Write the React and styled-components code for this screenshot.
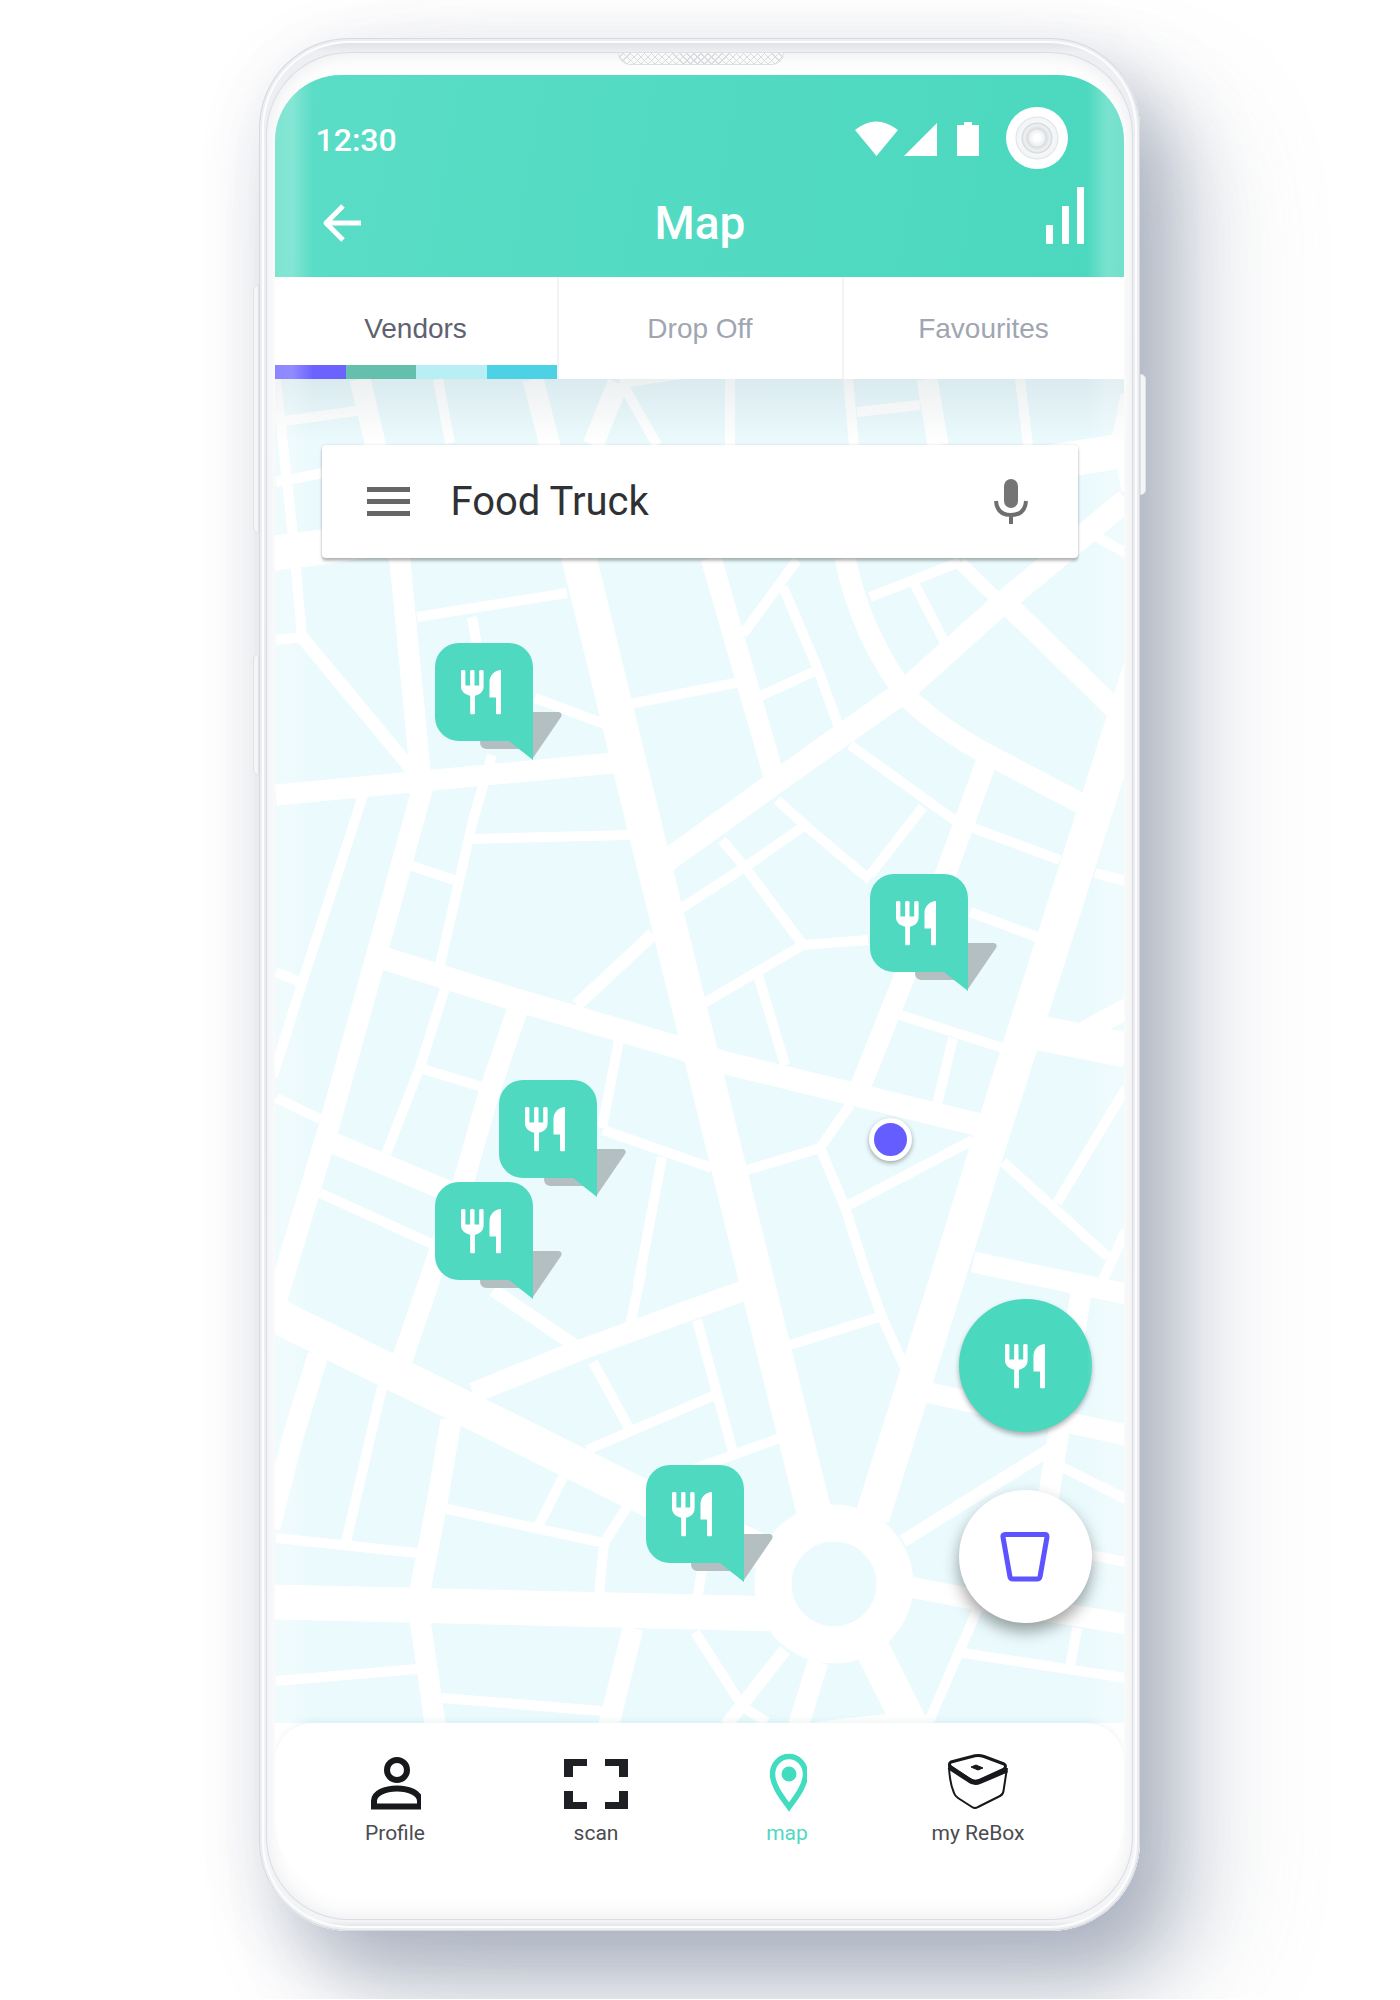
import React from "react";
import styled, { createGlobalStyle } from "styled-components";

const MINT = "#4fd9c0";
const INDIGO = "#655dff";

const GlobalStyle = createGlobalStyle`
  *, *::before, *::after { box-sizing: border-box; }
  body { margin: 0; background: #fff; font-family: Roboto, "Liberation Sans", sans-serif; }
  button, input { font: inherit; color: inherit; border: 0; padding: 0; background: none; }
`;

const Stage = styled.main`
  display: flex;
  justify-content: center;
  padding: 38px 25px 68px 23px;
  overflow: hidden;
`;

const Phone = styled.div`
  position: relative;
  width: 100%;
  max-width: 881px;
  padding: 14px 7px 11px;
  border-radius: 90px;
  background: linear-gradient(#d9dbe1, #eeeff2 14px, #e9ebef 50%, #f3f4f6 calc(100% - 10px), #d5d8de);
  box-shadow:
    inset 0 0 0 1px #d6d9e0,
    inset 0 0 0 3px #eceef1,
    inset 0 0 0 5px #fdfdfe,
    0 10px 80px rgba(40, 50, 80, 0.06),
    34px 48px 80px rgba(112, 124, 148, 0.48),
    80px 60px 120px rgba(130, 140, 160, 0.16);
`;

const SideKey = styled.span`
  position: absolute;
  ${(p) => (p.$side === "left" ? "right: 100%;" : "left: 100%;")}
  top: ${(p) => p.$top}px;
  width: 6px;
  height: ${(p) => p.$height}px;
  border: 1px solid #dfe2e7;
  border-radius: ${(p) => (p.$side === "left" ? "5px 0 0 5px" : "0 5px 5px 0")};
  background: #f4f5f7;
`;

const Face = styled.div`
  position: relative;
  padding: 23px 9px 30px;
  border-radius: 83px;
  background: #fff;
  box-shadow: inset 0 0 0 1px #d9dce3, inset 0 0 22px rgba(60, 70, 90, 0.13);
`;

const Speaker = styled.span`
  position: absolute;
  top: 0;
  left: 50%;
  width: 166px;
  height: 13px;
  margin-left: -81px;
  border: 1px solid #dcdfe4;
  border-radius: 2px 2px 20px 20px;
  background:
    repeating-linear-gradient(45deg, #d9dbdf 0 1px, transparent 1px 5px),
    repeating-linear-gradient(-45deg, #d9dbdf 0 1px, #fafafa 1px 5px);
`;

const Screen = styled.div`
  position: relative;
  overflow: hidden;
  border-radius: 66px 66px 70px 70px;
  background: #fff;
`;

const Gloss = styled.span`
  position: absolute;
  z-index: 2;
  top: 0;
  bottom: 0;
  ${(p) => p.$side}: 0;
  width: 38px;
  pointer-events: none;
  background: linear-gradient(
    to ${(p) => p.$side},
    transparent,
    rgba(255, 255, 255, 0.26) 55%,
    rgba(255, 255, 255, 0.22)
  );
`;

const Header = styled.header`
  height: 202px;
  padding: 32px 39px 0 41px;
  color: #fff;
  background: linear-gradient(100deg, #5bddc6, #4ad8be);
`;

const StatusBar = styled.div`
  display: flex;
  align-items: center;
  height: 62px;
  padding-right: 17px;
`;

const Clock = styled.time`
  flex: 1;
  padding-top: 4px;
  font-size: 32px;
  line-height: 40px;
  font-weight: 500;
`;

const Camera = styled.span`
  width: 62px;
  height: 62px;
  margin-left: 27px;
  border-radius: 50%;
  background: radial-gradient(
    circle at 50% 50%,
    #fff 0 3px, #eceef0 8px, #d9dde0 9px, #eff1f2 13px, #d5dadd 15px,
    #f6f7f8 16px, #f3f4f5 20px, #e0e4e6 21px, #fff 22px
  );
`;

const TitleBar = styled.div`
  display: grid;
  grid-template-columns: 48px 1fr 48px;
  align-items: center;
  height: 64px;
  margin-top: 12px;
`;

const IconButton = styled.button`
  display: flex;
  justify-content: ${(p) => p.$align || "center"};
  cursor: pointer;
`;

const Title = styled.h1`
  margin: 0;
  padding-top: 14px;
  text-align: center;
  font-size: 46px;
  line-height: 56px;
  font-weight: 500;
`;

const Tabs = styled.nav`
  position: relative;
  display: grid;
  grid-template-columns: 282fr 285fr 282fr;
  height: 102px;
  background: #fff;
`;

const Tab = styled.button`
  position: relative;
  padding-top: 2px;
  font-family: "Liberation Sans", Arial, sans-serif;
  font-size: 28px;
  line-height: 32px;
  color: ${(p) => (p.$active ? "#5d6270" : "#a0a6b1")};
  cursor: pointer;
  & + & { border-left: 2px solid #f2f3f4; }
`;

const Stripe = styled.span`
  position: absolute;
  left: 0;
  right: 0;
  bottom: 0;
  height: 14px;
  background: linear-gradient(
    to right,
    #6c63ff 25%, #64bfad 25% 50%, #b8eff4 50% 75%, #4dd1e5 75%
  );
`;

const MapArea = styled.section`
  position: relative;
  aspect-ratio: 849 / 1344;
  background: #eafafd;
`;

const Streets = styled.svg`
  position: absolute;
  inset: 0;
  width: 100%;
  height: calc(100% + 40px);
  fill: none;
  stroke: #fff;
`;

const TopShade = styled.span`
  position: absolute;
  inset: 0 0 auto;
  height: 64px;
  background: linear-gradient(rgba(120, 140, 150, 0.14), rgba(120, 150, 160, 0));
`;

const Search = styled.form`
  position: relative;
  display: flex;
  align-items: center;
  height: 113px;
  margin: 0 46px 0 47px;
  padding: 0 48px 0 45px;
  border-radius: 4px;
  background: #fff;
  box-shadow: 0 0 3px rgba(0, 0, 0, 0.12), 0 3px 3px rgba(0, 0, 0, 0.26);
`;

const MapTop = styled.div`
  padding-top: 66px;
`;

const SearchInput = styled.input`
  flex: 1;
  min-width: 0;
  margin-left: 41px;
  font-size: 40px;
  line-height: 48px;
  color: #303134;
  outline: 0;
`;

const Pin = styled.button`
  position: absolute;
  left: ${(p) => p.$x}%;
  top: ${(p) => p.$y}%;
  width: 128px;
  height: 118px;
  cursor: pointer;
  svg { display: block; }
`;

const Here = styled.span`
  position: absolute;
  left: 70%;
  top: 55%;
  width: 43px;
  height: 43px;
  border: 5px solid #fff;
  border-radius: 50%;
  background: ${INDIGO};
  box-shadow: 0 2px 5px rgba(0, 0, 0, 0.35);
`;

const Actions = styled.div`
  position: absolute;
  right: 32px;
  bottom: 100px;
  display: grid;
  gap: 58px;
`;

const Fab = styled.button`
  display: grid;
  place-items: center;
  width: 133px;
  height: 133px;
  border-radius: 50%;
  background: ${(p) => (p.$filled ? "#4ad8be" : "#fff")};
  box-shadow: ${(p) =>
    p.$filled ? "0 3px 5px rgba(0, 0, 0, 0.3)" : "0 8px 16px rgba(0, 0, 0, 0.38)"};
  cursor: pointer;
`;

const BottomNav = styled.nav`
  position: relative;
  display: grid;
  grid-template-columns: 10fr 10fr 9fr 10fr;
  height: 167px;
  padding: 29px 45px 0 20px;
  border-radius: 38px 38px 0 0;
  background: #fff;
  box-shadow: 0 -2px 6px rgba(80, 140, 150, 0.1);
`;

const NavItem = styled.a`
  display: flex;
  flex-direction: column;
  align-items: center;
  gap: 9px;
  height: 96px;
  font-size: 21px;
  line-height: 24px;
  color: ${(p) => (p.$active ? MINT : "#4a4b4f")};
  text-decoration: none;
`;

/* Streets grouped by stroke width, in map units. */
const ROADS = [
  [10, `M276 422L357 411 M276 379L293 537L302 637 M276 482L323 473 M276 640L303 637
    M438 379L450 443 M417 617L567 593 M472 617L477 645 M535 698L607 725 M625 388L657 445
    M620 383L690 373 M730 379V445 M848 379L854 445 M857 412L920 405 M1020 379L1028 445
    M797 560L743 634 M783 587L817 667L840 730 M758 697L813 672 M870 597L960 562
    M914 583L945 643 M1097 537L1126 553 M630 704L740 682 M850 745L957 822L1060 860
    M923 807L870 875 M1095 873L1126 881 M777 800L807 827L870 880 M804 826L745 867L680 909
    M722 840L745 867L803 945L868 940 M803 945L704 1003 M758 975L785 1065 M970 912L1040 938
    M900 1015L1003 1048 M953 1038L937 1105 M850 1105L820 1148L747 1170 M973 1140L845 1207
    M820 1148L845 1207L865 1270L882 1317L905 1368 M1003 1162L1108 1257 M1057 1203L1126 1088
    M1126 1230L1102 1282 M1062 1467L1126 1499 M1080 1553L1126 1562 M978 1608L927 1726
    M963 1653L1126 1678 M1077 1628L1070 1667 M695 1632L743 1707L767 1722 M790 1345L882 1316
    M697 1320L733 1452 M715 1395L587 1450 M780 1438L650 1485 M642 1270L630 1325
    M662 1157L638 1285 M593 1362L630 1430 M382 1387L346 1542 M276 1538L417 1553
    M443 1508L604 1543 M563 1477L538 1527 M627 1507L604 1543L599 1595 M702 1570L697 1600
    M276 1681L417 1669 M442 1698L602 1711 M363 795L355 820L302 983L273 1076 M276 972L300 982
    M412 866L454 880 M492 755L473 820L440 965 M473 839L630 835 M445 988L420 1067L386 1154
    M423 1069L482 1087 M276 1098L320 1119 M320 1193L432 1244 M619 1040L602 1128 M603 1130L712 1168
    M815 1727L895 1718`],
  [13, `M302 637L412 770 M653 934L577 1005 M960 563L998 600 M1054 1447L903 1541
    M493 1290L577 1347 M785 1650L726 1725`],
  [21, `M533 379L575 545 M360 379L375 443L400 562L422 790L377 953L328 1130L273 1312 M618 383L593 445
    M927 379L938 445 M711 558L775 780 M845 558Q862 640 912 702Q943 730 983 752L1082 804
    M1008 605L1122 716 M987 760L947 870L903 980L857 1095 M276 795L613 763
    M1085 1031L1130 1007 M973 1262L1126 1294 M1082 1287L1048 1500 M925 1392L1126 1435
    M910 1587L967 1598L1126 1624 M818 1662L798 1727 M745 1290L690 1310L575 1352L473 1393
    M518 1008L489 1093L464 1180L433 1270L402 1360 M318 1355L292 1440L270 1528
    M451 1420L437 1503L420 1590 M420 1620L436 1730 M633 1628L607 1732 M331 1142L450 1192
    M1131 395L1122 440L1132 490`],
  [23, `M1126 500L1000 605L903 692L842 735L772 785L665 862
    M380 957L510 998L680 1048L722 1062L857 1095L980 1125`],
  [35, `M576 545L580 562L643 820L754 1270L816 1520 M872 1518L950 1270L987 1150L1092 820L1148 644
    M1000 470L1090 456L1126 450 M273 553L323 547L400 535 M1040 1033L1126 1050
    M273 1314L442 1397L627 1489L775 1558 M273 1602L780 1614 M868 1640L912 1728`],
];

const PINS = [
  { name: "Vendor north", x: 435, y: 643 },
  { name: "Vendor east", x: 870, y: 874 },
  { name: "Vendor centre", x: 499, y: 1080 },
  { name: "Vendor west", x: 435, y: 1182 },
  { name: "Vendor south", x: 646, y: 1465 },
];

const CutleryShape = () => (
  <path
    fill="#fff"
    d="M26 28q0-1 2.2-1t2.2 1v14.500h4.700V28q0-1 2.200-1t2.200 1v14.500h4.700V28q0-1 2.200-1t2.200 1v15.500c0 5-3.800 8.300-8.600 9.200V70q0 1.300-1.200 1.300h-2.400q-1.200 0-1.200-1.300V52.700c-4.800-.9-9.200-4.200-9.200-9.200z M66 27v43.300q0 1-1 1h-3q-1 0-1-1V54.500h-6.500V38.500c0-6 5.300-11.500 11.500-11.500z"
  />
);

const StreetMap = () => (
  <Streets viewBox="275 379 849 1384" preserveAspectRatio="xMidYMin slice" aria-hidden="true">
    {ROADS.map(([width, d]) => (
      <path key={width} d={d} strokeWidth={width} strokeLinejoin="round" />
    ))}
    <circle cx="834" cy="1584" r="61" strokeWidth="37" fill="#eafafd" />
  </Streets>
);

const VendorPin = ({ name, x, y }) => (
  <Pin aria-label={name} $x={((x - 275) / 849) * 100} $y={((y - 379) / 1344) * 100}>
    <svg width="128" height="118" viewBox="0 0 128 118">
      <path d="M55 69h69q4 1 2 5L98 115 84 106H51q-6-1-6-7z" fill="#b4bfc2" />
      <path
        d="M24 0h50a24 24 0 0 1 24 24v93L74 98H24A24 24 0 0 1 0 74V24A24 24 0 0 1 24 0z"
        fill={MINT}
      />
      <CutleryShape />
    </svg>
  </Pin>
);

const NAV = [
  {
    label: "Profile",
    icon: (
      <svg width="52" height="60" viewBox="-2 0 52 60" fill="none" stroke="#17181b" strokeWidth="6">
        <circle cx="26" cy="18" r="10" />
        <path d="M3 54.500V49C3 41 14 36.500 26 36.500S49 41 49 49v5.500z" />
      </svg>
    ),
  },
  {
    label: "scan",
    icon: (
      <svg width="64" height="60" viewBox="0 0 64 60" fill="#1f2023">
        <path d="M0 7h23v7H9v11H0z M41 7h23v18h-9V14H41z M0 39h9v11h14v7H0z M55 39h9v18H41v-7h14z" />
      </svg>
    ),
  },
  {
    label: "map",
    active: true,
    icon: (
      <svg width="40" height="60" viewBox="-2 0 40 60" fill="none">
        <path d="M20 55C12 44 3.500 33 3.500 22a16.500 17.500 0 0 1 33 0C36.500 33 28 44 20 55z" stroke="#42dcc0" strokeWidth="5.500" />
        <circle cx="20" cy="22" r="7.500" fill="#42dcc0" />
      </svg>
    ),
  },
  {
    label: "my ReBox",
    icon: (
      <svg width="62" height="60" viewBox="0 0 62 60" fill="none" stroke="#17181b" strokeLinejoin="round">
        <path d="M4 10L25 4.500Q31 2.500 37 4.500L57 12Q60 14 57 17L33 28Q27 31 22 27L4 15Q1 12 4 10z" strokeWidth="3" />
        <path d="M2 15L22 28Q27 32 33 29.500L60 18" strokeWidth="5" />
        <path d="M2 12q0 17 5 29q1 3 4 5l14 9q3 2 6 0l22-11q3-1.500 3.500-5L60 16" strokeWidth="2" />
        <path d="M24 15l5-2 7 3-5 2z" fill="#17181b" />
      </svg>
    ),
  },
];

export default function App() {
  return (
    <>
      <GlobalStyle />
      <Stage>
        <Phone>
          <SideKey $side="left" $top={247} $height={248} />
          <SideKey $side="left" $top={616} $height={121} />
          <SideKey $side="right" $top={336} $height={121} />
          <Face>
            <Speaker />
            <Screen>
              <Gloss $side="left" />
              <Gloss $side="right" />
              <Header>
                <StatusBar>
                  <Clock>12:30</Clock>
                  <svg width="124" height="36" viewBox="0 -1 124 36" fill="#fff" aria-hidden="true">
                    <path d="M0 9Q21-8 43 9L21.500 35z M49 35L82 2v33z M102 4h7V1h8v3h7v31h-22z" />
                  </svg>
                  <Camera />
                </StatusBar>
                <TitleBar>
                  <IconButton $align="flex-start" aria-label="Back">
                    <svg width="48" height="52" viewBox="0 -8 48 52" fill="none" stroke="#fff" strokeWidth="5">
                      <path d="M45 25H9 M27 8L10 25l17 17" strokeLinejoin="round" />
                    </svg>
                  </IconButton>
                  <Title>Map</Title>
                  <IconButton $align="flex-end" aria-label="Statistics">
                    <svg width="39" height="58" viewBox="0 0 39 58" fill="#fff">
                      <rect y="38" width="7" height="19" rx="1" />
                      <rect x="16" y="19" width="7" height="38" rx="1" />
                      <rect x="31" width="7" height="57" rx="1" />
                    </svg>
                  </IconButton>
                </TitleBar>
              </Header>
              <Tabs>
                <Tab $active>Vendors<Stripe /></Tab>
                <Tab>Drop Off</Tab>
                <Tab>Favourites</Tab>
              </Tabs>
              <MapArea>
                <StreetMap />
                <TopShade />
                <MapTop>
                  <Search onSubmit={(e) => e.preventDefault()}>
                    <IconButton type="button" aria-label="Menu">
                      <svg width="43" height="30" viewBox="0 0 43 30" fill="#666">
                        <path d="M0 0h43v5H0z M0 12h43v5H0z M0 24h43v5H0z" />
                      </svg>
                    </IconButton>
                    <SearchInput aria-label="Search the map" defaultValue="Food Truck" />
                    <IconButton type="button" aria-label="Voice search">
                      <svg width="38" height="48" viewBox="0 0 38 48" fill="none" stroke="#6e6e6e" strokeWidth="4">
                        <rect x="12" y="1" width="14" height="29" rx="7" fill="#757575" stroke="none" />
                        <path d="M4 23q1 14 15 14t15-14 M19 37v9" />
                      </svg>
                    </IconButton>
                  </Search>
                </MapTop>
                {PINS.map((pin) => (
                  <VendorPin key={pin.name} {...pin} />
                ))}
                <Here />
                <Actions>
                  <Fab $filled aria-label="Show vendors">
                    <svg width="42" height="46" viewBox="25 26 42 46"><CutleryShape /></svg>
                  </Fab>
                  <Fab aria-label="Show cups">
                    <svg width="50" height="50" viewBox="0 0 50 50" fill="none" stroke="#5d54ff" strokeWidth="5" strokeLinejoin="round">
                      <path d="M5 2.500h40q2 0 2 2.500l-7 40q-.5 2-3 2H13q-2.500 0-3-2L3 5Q2.500 2.500 5 2.500z" />
                    </svg>
                  </Fab>
                </Actions>
              </MapArea>
              <BottomNav>
                {NAV.map(({ label, icon, active }) => (
                  <NavItem key={label} href="#" $active={active}>
                    {icon}
                    {label}
                  </NavItem>
                ))}
              </BottomNav>
            </Screen>
          </Face>
        </Phone>
      </Stage>
    </>
  );
}
